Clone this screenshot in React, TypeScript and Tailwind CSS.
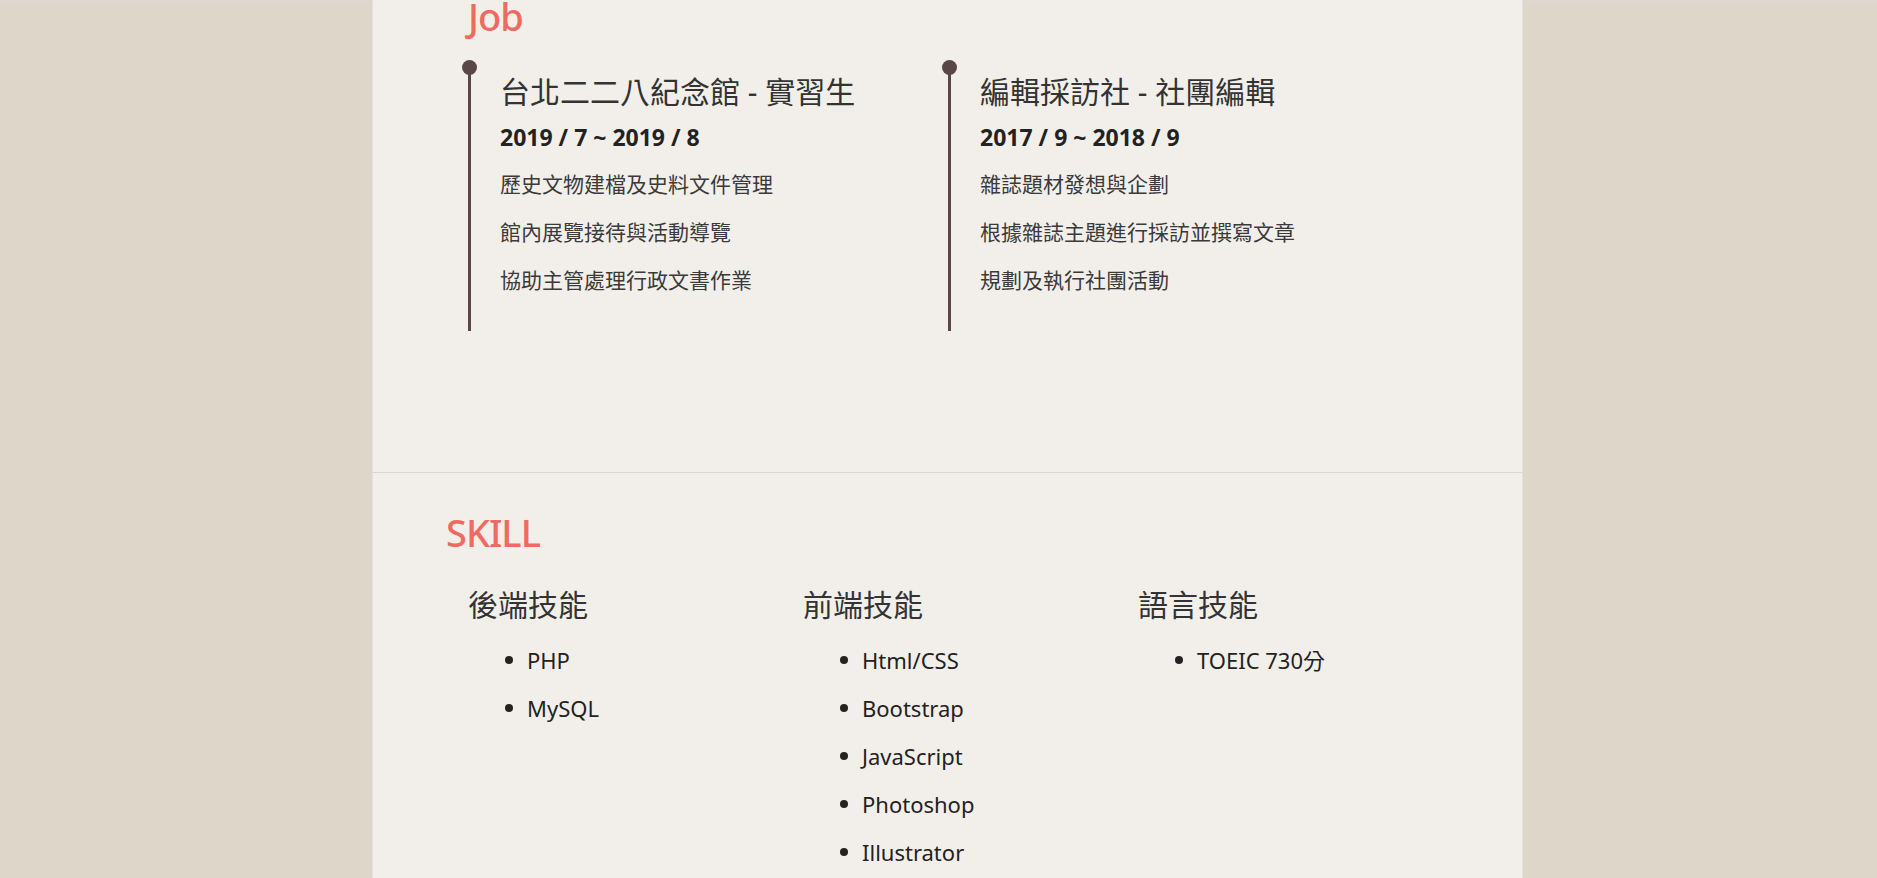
import React from "react";

const jobs = [
  {
    title: "台北二二八紀念館 - 實習生",
    period: "2019 / 7 ~ 2019 / 8",
    tasks: ["歷史文物建檔及史料文件管理", "館內展覽接待與活動導覽", "協助主管處理行政文書作業"],
  },
  {
    title: "編輯採訪社 - 社團編輯",
    period: "2017 / 9 ~ 2018 / 9",
    tasks: ["雜誌題材發想與企劃", "根據雜誌主題進行採訪並撰寫文章", "規劃及執行社團活動"],
  },
];

const skills = [
  { name: "後端技能", items: ["PHP", "MySQL"] },
  { name: "前端技能", items: ["Html/CSS", "Bootstrap", "JavaScript", "Photoshop", "Illustrator"] },
  { name: "語言技能", items: ["TOEIC 730分"] },
];

export default function App() {
  return (
    <div
      className="h-[878px] overflow-hidden bg-[#ddd6c9]"
      style={{ fontFamily: '"Noto Sans", "Noto Sans CJK TC", sans-serif' }}
    >
      <div className="mt-px h-px bg-[#dcdad6]" />
      <div className="ml-[372px] w-[1151px] min-h-[900px] bg-[#f2efea] border-x border-[#e3e0db]">
        {/* Job */}
        <section className="pl-[95px] pb-[141px]">
          <h2 className="-mt-[10px] text-[38px] leading-[48px] tracking-[-1px] font-medium text-[#ef6b60]">Job</h2>
          <div className="mt-[27px] flex">
            {jobs.map((job, i) => (
              <div key={i} className="w-[480px]">
                <div className="relative border-l-[3px] border-[#5b4646] pl-[29px] pt-[7px] pb-[27px]">
                  <span className="absolute -left-[9px] -top-[7px] w-[15px] h-[15px] rounded-full bg-[#5b4646]" />
                  <h3 className="text-[30px] leading-[36px] text-[#333333]">{job.title}</h3>
                  <p className="mt-[12px] text-[23px] leading-[30px] font-bold text-[#222222]">{job.period}</p>
                  <ul className="mt-[8px]">
                    {job.tasks.map((t, idx) => (
                      <li key={idx} className="text-[21px] leading-[48px] text-[#3a3a3a]">
                        {t}
                      </li>
                    ))}
                  </ul>
                </div>
              </div>
            ))}
          </div>
        </section>

        <div className="h-px bg-[#dad6d0]" />

        {/* Skill */}
        <section className="pl-[73px] pt-[35px]">
          <h2 className="text-[38px] leading-[48px] tracking-[-1px] font-medium text-[#ef6b60]">SKILL</h2>
          <div className="mt-[31px] pl-[22px] flex">
            {skills.map((s, i) => (
              <div key={i} className="w-[335px]">
                <h3 className="text-[30px] leading-[36px] text-[#333333]">{s.name}</h3>
                <ul className="mt-[13px] pl-[37px]">
                  {s.items.map((it, idx) => (
                    <li key={idx} className="flex items-center gap-[14px] text-[22px] leading-[48px] text-[#222222]">
                      <span className="w-2 h-2 rounded-full bg-[#222222]" />
                      {it}
                    </li>
                  ))}
                </ul>
              </div>
            ))}
          </div>
        </section>
      </div>
    </div>
  );
}
